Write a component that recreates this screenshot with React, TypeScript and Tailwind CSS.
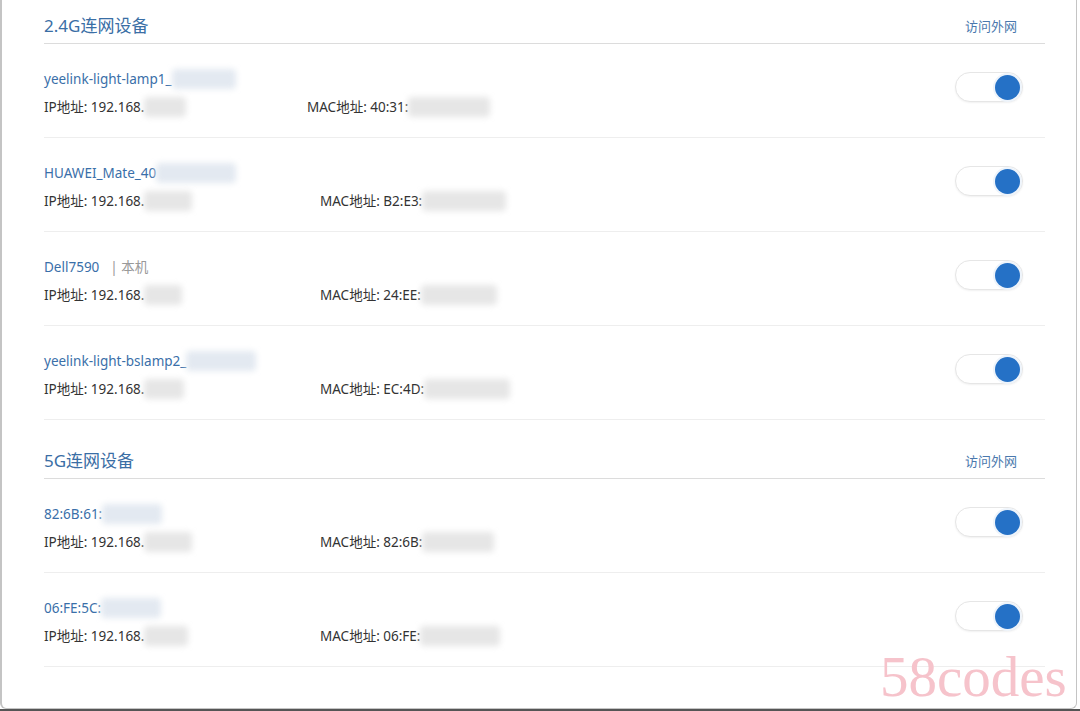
import React from "react";

type Dev = {
  name: string;
  nameBlur?: number;
  tag?: string;
  ipBlur: number;
  macLabel: string;
  macBlur: number;
  macX: number;
};

const Blur = ({ w, tone }: { w: number; tone: "blue" | "gray" }) => (
  <span
    className={
      "inline-block h-[20px] align-middle rounded-[4px] blur-[3px] " +
      (tone === "blue" ? "bg-[#e3e9f1]" : "bg-[#e6e6e6]")
    }
    style={{ width: w }}
  />
);

const Toggle = () => (
  <div className="w-[68px] h-[30px] rounded-full border border-[#e6e6e6] bg-white shadow-[0_1px_2px_rgba(0,0,0,0.06)] flex items-center justify-end pr-[2px]">
    <div className="w-[25px] h-[25px] rounded-full bg-[#2571c6] ring-2 ring-[#eef4fb]" />
  </div>
);

const Row = ({ d }: { d: Dev }) => (
  <div className="flex border-b border-[#eeeeee] pt-[25px] pb-[20px]">
    <div className="flex-1">
      <div className="h-[20px] leading-[20px] text-[13.5px] text-[#3a6fa9] flex items-center">
        <span>{d.name}</span>
        {d.nameBlur && <Blur w={d.nameBlur} tone="blue" />}
        {d.tag && <span className="ml-[11px] text-[#999]">| {d.tag}</span>}
      </div>
      <div className="mt-[8px] h-[20px] leading-[20px] text-[13.5px] text-[#333] flex items-center relative">
        <span className="flex items-center">
          IP地址: 192.168.
          <Blur w={d.ipBlur} tone="gray" />
        </span>
        <span className="absolute top-0 flex items-center" style={{ left: d.macX }}>
          MAC地址: {d.macLabel}
          <Blur w={d.macBlur} tone="gray" />
        </span>
      </div>
    </div>
    <div className="pt-[3px] pr-[22px]">
      <Toggle />
    </div>
  </div>
);

const Header = ({ title, first }: { title: string; first?: boolean }) => (
  <div
    className={
      "flex items-center justify-between border-b border-[#dcdcdc] pb-[5px] " +
      (first ? "pt-[14px]" : "pt-[29px]")
    }
  >
    <div className="text-[17px] leading-[24px] text-[#3a6ea5]">{title}</div>
    <div className="text-[13px] leading-[24px] text-[#4a78ad] pr-[28px]">访问外网</div>
  </div>
);

const g24: Dev[] = [
  { name: "yeelink-light-lamp1_", nameBlur: 64, ipBlur: 42, macLabel: "40:31:", macBlur: 82, macX: 263 },
  { name: "HUAWEI_Mate_40", nameBlur: 80, ipBlur: 48, macLabel: "B2:E3:", macBlur: 84, macX: 276 },
  { name: "Dell7590", tag: "本机", ipBlur: 38, macLabel: "24:EE:", macBlur: 76, macX: 276 },
  { name: "yeelink-light-bslamp2_", nameBlur: 70, ipBlur: 40, macLabel: "EC:4D:", macBlur: 86, macX: 276 },
];
const g5: Dev[] = [
  { name: "82:6B:61:", nameBlur: 60, ipBlur: 48, macLabel: "82:6B:", macBlur: 72, macX: 276 },
  { name: "06:FE:5C:", nameBlur: 60, ipBlur: 44, macLabel: "06:FE:", macBlur: 80, macX: 276 },
];

export default function App() {
  return (
    <div
      className="w-[1080px] h-[711px] bg-white overflow-hidden relative"
      style={{ fontFamily: '"Noto Sans", "Noto Sans CJK SC", sans-serif' }}
    >
      <div className="w-[1077px] h-[709px] border-l-2 border-r border-b border-[#c4c4c4] rounded-b-[6px] bg-white pl-[42px] pr-[31px]">
        <Header title="2.4G连网设备" first />
        {g24.map((d, i) => (
          <Row key={i} d={d} />
        ))}
        <Header title="5G连网设备" />
        {g5.map((d, i) => (
          <Row key={i} d={d} />
        ))}
      </div>
      <div className="h-[2px] bg-[#555]" />
      <div
        className="absolute left-[880px] top-[647px] text-[57px] leading-[60px] text-[#f6c3cb]"
        style={{ fontFamily: '"Liberation Serif", serif' }}
      >
        58codes
      </div>
    </div>
  );
}
